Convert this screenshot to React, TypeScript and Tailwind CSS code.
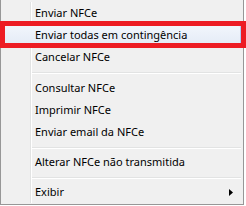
import React from "react";

type Entry =
  | { kind: "item"; label: string; active?: boolean; submenu?: boolean }
  | { kind: "sep"; h: string };

const entries: Entry[] = [
  { kind: "item", label: "Enviar NFCe" },
  { kind: "item", label: "Enviar todas em contingência", active: true },
  { kind: "item", label: "Cancelar NFCe" },
  { kind: "sep", h: "h-[9px]" },
  { kind: "item", label: "Consultar NFCe" },
  { kind: "item", label: "Imprimir NFCe" },
  { kind: "item", label: "Enviar email da NFCe" },
  { kind: "sep", h: "h-[8px]" },
  { kind: "item", label: "Alterar NFCe não transmitida" },
  { kind: "sep", h: "h-[8px]" },
  { kind: "item", label: "Exibir", submenu: true },
];

function Gutter() {
  return (
    <div className="flex h-full shrink-0">
      <div className="h-full w-[30px] border-r border-[#e2e3e3]" />
      <div className="h-full w-px bg-white" />
    </div>
  );
}

export default function App() {
  return (
    <div
      className="relative h-[206px] w-[246px] overflow-hidden bg-white text-[11px] text-black"
      style={{ fontFamily: '"Noto Sans", "Open Sans", sans-serif' }}
    >
      <div className="flex h-[205px] w-[244px] flex-col border-x border-b border-[#979797] bg-[#f0f0f0] pt-[2px]">
        {entries.map((e, i) => {
          if (e.kind === "sep") {
            return (
              <div key={i} className={`flex ${e.h}`}>
                <Gutter />
                <div className="mr-[2px] flex-1">
                  <div className="mt-[4px] h-px bg-[#e2e3e3]" />
                  <div className="h-px bg-white" />
                </div>
              </div>
            );
          }
          if (e.active) {
            return (
              <div key={i} className="flex h-[22px] px-[2px]">
                <div className="flex flex-1 items-center rounded-[3px] border border-[#aecff7] bg-gradient-to-b from-[#f2f6fc] to-[#e4ebf6] pl-[31px]">
                  {e.label}
                </div>
              </div>
            );
          }
          return (
            <div key={i} className="flex h-[22px] items-center">
              <Gutter />
              <span className="pl-[3px]">{e.label}</span>
              {e.submenu && (
                <svg className="ml-auto mr-[10px]" width="4" height="7" viewBox="0 0 4 7">
                  <polygon points="0,0 4,3.5 0,7" fill="#000" />
                </svg>
              )}
            </div>
          );
        })}
      </div>
      {/* red annotation box */}
      <div className="absolute left-0 top-[21px] h-[27px] w-[246px] border-[5px] border-[#ed1c24]" />
    </div>
  );
}
